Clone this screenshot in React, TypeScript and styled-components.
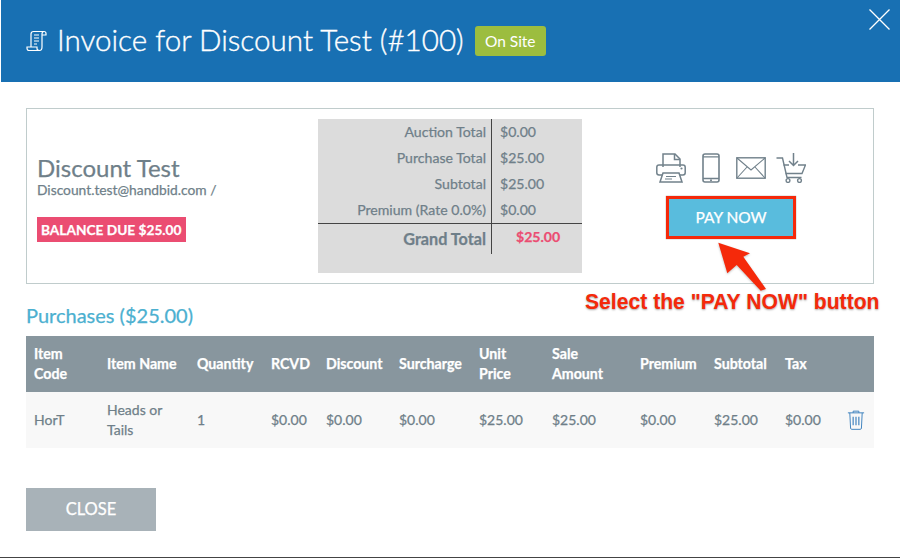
import styled, { createGlobalStyle } from "styled-components";

const GlobalStyle = createGlobalStyle`
  html, body {
    margin: 0;
    padding: 0;
    background: #fff;
    font-family: Lato, "Open Sans", sans-serif;
  }
`;

const Modal = styled.div`
  position: relative;
  width: 900px;
  height: 558px;
  box-sizing: border-box;
  overflow: hidden;
  border-bottom: 1px solid #444;
  background: #fff;
`;

const Header = styled.header`
  position: relative;
  height: 82px;
  margin-left: 1px;
  background: #1870b3;
  display: flex;
  align-items: center;
  padding-left: 25px;
  color: #fff;
`;

const Title = styled.h1`
  margin: 0 11px 2px 9px;
  font-size: 29.6px;
  font-weight: 300;
  line-height: 40px;
  white-space: nowrap;
  -webkit-text-stroke: 0.35px #fff;
`;

const Badge = styled.span`
  display: flex;
  align-items: center;
  justify-content: center;
  width: 71px;
  height: 30px;
  border-radius: 3px;
  background: #9cbd3f;
  font-size: 15.5px;
`;

const CloseX = styled.svg`
  position: absolute;
  top: 9px;
  right: 10px;
`;

const Content = styled.main`
  padding: 26px 26px 0;
  -webkit-text-stroke: 0.25px currentColor;
`;

const Summary = styled.section`
  height: 176px;
  box-sizing: border-box;
  border: 1px solid #c0cccc;
  display: flex;
  padding: 10px 0;
`;

const Buyer = styled.div`
  width: 291px;
  padding: 34px 0 0 10px;
  box-sizing: border-box;
  color: #6f7f89;
`;

const BuyerName = styled.div`
  font-size: 24px;
  line-height: 29px;
`;

const BuyerMail = styled.div`
  font-size: 13.8px;
  line-height: 15px;
`;

const Balance = styled.div`
  display: inline-block;
  margin-top: 20px;
  padding: 0 4px;
  background: #eb4d72;
  color: #fff;
  font-size: 13.7px;
  font-weight: 700;
  line-height: 25px;
`;

const Totals = styled.div`
  width: 264px;
  height: 154px;
  background: #dcdcdc;
  color: #6f7f89;
  font-size: 14.1px;
`;

const TotalRow = styled.div<{ $grand?: boolean }>`
  display: grid;
  grid-template-columns: 174px 90px;
  height: ${(p) => (p.$grand ? "30px" : "26px")};
  line-height: ${(p) => (p.$grand ? "30px" : "26px")};
  border-top: ${(p) => (p.$grand ? "1px solid #444" : "none")};
`;

const TotalLabel = styled.div<{ $grand?: boolean }>`
  text-align: right;
  padding-right: 5px;
  border-right: 1px solid #444;
  font-size: ${(p) => (p.$grand ? "16.2px" : "14.1px")};
  font-weight: ${(p) => (p.$grand ? 700 : 400)};
`;

const TotalValue = styled.div`
  padding-left: 8px;
`;

const GrandValue = styled.div`
  padding-left: 24px;
  color: #eb4d72;
  font-weight: 700;
  line-height: 26px;
`;

const Actions = styled.div`
  flex: 1;
  display: flex;
  flex-direction: column;
  align-items: center;
  padding: 33px 0 0 7px;
`;

const IconRow = styled.div`
  display: flex;
  align-items: center;
  height: 32px;
  color: #71818b;
`;

const IconSlot = styled.span<{ $gap: number }>`
  display: flex;
  margin-right: ${(p) => p.$gap}px;
`;

const PayButton = styled.button`
  margin-top: 13px;
  width: 126px;
  height: 39px;
  padding: 0;
  border: 0;
  background: #59bcdd;
  color: #fff;
  font-family: inherit;
  font-size: 15.5px;
  -webkit-text-stroke: 0.25px #fff;
`;

const SectionTitle = styled.h2`
  margin: 19px 0 9px;
  color: #4cb0d0;
  font-size: 20px;
  font-weight: 400;
  line-height: 24px;
`;

const columns = "73px 90px 74px 55px 73px 80px 73px 88px 74px 71px 62px 1fr";

const HeadRow = styled.div`
  display: grid;
  grid-template-columns: ${columns};
  align-items: center;
  height: 56px;
  padding-left: 8px;
  background: #88969e;
  color: #fff;
  font-size: 14.2px;
  font-weight: 700;
  line-height: 20px;
`;

const BodyRow = styled.div`
  display: grid;
  grid-template-columns: ${columns};
  align-items: center;
  height: 56px;
  padding-left: 8px;
  background: #f8f8f8;
  color: #6f7f89;
  font-size: 14px;
  line-height: 20px;
`;

const CloseButton = styled.button`
  display: block;
  margin-top: 40px;
  width: 130px;
  height: 43px;
  padding: 0 0 1px;
  border: 0;
  background: #a8b2b8;
  color: #fff;
  font-family: inherit;
  font-size: 16.5px;
  -webkit-text-stroke: 0.25px #fff;
`;

const Highlight = styled.div`
  position: absolute;
  left: 666px;
  top: 196px;
  width: 130px;
  height: 43px;
  box-sizing: border-box;
  border: 3px solid #f5290a;
  box-shadow: 0 0 1px rgba(0, 0, 0, 0.5);
`;

const Arrow = styled.svg`
  position: absolute;
  left: 715px;
  top: 238px;
  filter: drop-shadow(0 1px 1px rgba(0, 0, 0, 0.25));
`;

const Callout = styled.div`
  position: absolute;
  left: 585px;
  top: 290px;
  color: #f5290a;
  font-family: "Liberation Sans", Arial, sans-serif;
  font-size: 21.15px;
  font-weight: 700;
  line-height: 24px;
  white-space: nowrap;
  text-shadow: 0 1px 2px rgba(0, 0, 0, 0.35);
`;

const headings = [
  <>Item<br />Code</>,
  "Item Name",
  "Quantity",
  "RCVD",
  "Discount",
  "Surcharge",
  <>Unit<br />Price</>,
  <>Sale<br />Amount</>,
  "Premium",
  "Subtotal",
  "Tax",
];

const cells = [
  "HorT",
  <>Heads or<br />Tails</>,
  "1",
  "$0.00",
  "$0.00",
  "$0.00",
  "$25.00",
  "$25.00",
  "$0.00",
  "$25.00",
  "$0.00",
];

const totals = [
  ["Auction Total", "$0.00"],
  ["Purchase Total", "$25.00"],
  ["Subtotal", "$25.00"],
  ["Premium (Rate 0.0%)", "$0.00"],
];

const ScrollIcon = () => (
  <svg width="22" height="22" viewBox="0 0 22 22" fill="none" stroke="#fff" strokeWidth="1.2">
    <path d="M5 17V4c0-1.500 1-2.500 2.500-2.500H18c-1.200 0-2 1-2 2.500v13c0 2-1 3.500-2.500 3.500H3c-1.300 0-2-1-2-2.200V17h10v1.500c0 1 .8 2 2.500 2" />
    <path d="M18 1.500c1.200 0 2 .8 2 2V5h-4M8 5h5M8 8h5M8 11h5M8 14h3" />
  </svg>
);

const PrinterIcon = () => (
  <svg width="30" height="30" viewBox="0 0 30 30" fill="none" stroke="currentColor" strokeWidth="1.500">
    <path d="M7 14V1h12l5 5v8" />
    <path d="M18.500 1v5.500H24" />
    <path d="M6 22H3c-1.200 0-2.200-1-2.200-2.200v-5.600C.8 13 1.800 12 3 12h24c1.200 0 2.200 1 2.200 2.200v5.600c0 1.200-1 2.200-2.200 2.200h-3" />
    <path d="M7 20h16l3 9H4z" />
    <path d="M10 23.500h10M9 26h7" strokeWidth="1.100" />
    <circle cx="25.500" cy="15.500" r="1.100" fill="currentColor" stroke="none" />
  </svg>
);

const PhoneIcon = () => (
  <svg width="18" height="30" viewBox="0 0 18 30" fill="none" stroke="currentColor" strokeWidth="1.600">
    <rect x="1" y="1" width="16" height="28" rx="2" />
    <path d="M1 3.800h16M1 25.500h16" strokeWidth="1.300" />
    <circle cx="9" cy="27.300" r="1" fill="currentColor" stroke="none" />
  </svg>
);

const MailIcon = () => (
  <svg width="30" height="22" viewBox="0 0 30 22" fill="none" stroke="currentColor" strokeWidth="1.400">
    <rect x=".8" y=".8" width="28.400" height="20.400" />
    <path d="M1 1l14 12L29 1M1 21l10.500-11.500M29 21L18.500 9.500" strokeWidth="1.100" />
  </svg>
);

const CartIcon = () => (
  <svg width="30" height="30" viewBox="0 0 30 30" fill="none" stroke="currentColor" strokeWidth="1.400">
    <path d="M.5 5h6l4.500 19.500h14.500" />
    <path d="M7.500 12H13M22 12h7.500L26 20.500H9.500" />
    <path d="M17.500 0v12M13 8l4.500 4.500L22 8" strokeWidth="1.500" />
    <circle cx="12" cy="27.500" r="1.900" />
    <circle cx="23.500" cy="27.500" r="1.900" />
  </svg>
);

const TrashIcon = () => (
  <svg width="18" height="20" viewBox="0 0 18 21" fill="none" stroke="#3a7fbd" strokeWidth="1">
    <path d="M.5 3h17M6 3V1.200h6V3M2.500 3l.8 16c0 .8.500 1.300 1.200 1.300h9c.7 0 1.200-.5 1.200-1.300l.8-16" />
    <path d="M6 7v9M9 7v9M12 7v9" strokeWidth="1.200" />
  </svg>
);

const App = () => {
  return (
    <Modal>
      <GlobalStyle />
      <Header>
        <ScrollIcon />
        <Title>Invoice for Discount Test (#100)</Title>
        <Badge>On Site</Badge>
        <CloseX width="21" height="21" viewBox="0 0 21 21" stroke="#fff" strokeWidth="1.300">
          <path d="M.5.500l20 20M20.500.500l-20 20" />
        </CloseX>
      </Header>
      <Content>
        <Summary>
          <Buyer>
            <BuyerName>Discount Test</BuyerName>
            <BuyerMail>Discount.test@handbid.com /</BuyerMail>
            <Balance>BALANCE DUE $25.00</Balance>
          </Buyer>
          <Totals>
            {totals.map(([label, value]) => (
              <TotalRow key={label}>
                <TotalLabel>{label}</TotalLabel>
                <TotalValue>{value}</TotalValue>
              </TotalRow>
            ))}
            <TotalRow $grand>
              <TotalLabel $grand>Grand Total</TotalLabel>
              <GrandValue>$25.00</GrandValue>
            </TotalRow>
          </Totals>
          <Actions>
            <IconRow>
              <IconSlot $gap={16}><PrinterIcon /></IconSlot>
              <IconSlot $gap={16}><PhoneIcon /></IconSlot>
              <IconSlot $gap={10}><MailIcon /></IconSlot>
              <IconSlot $gap={0}><CartIcon /></IconSlot>
            </IconRow>
            <PayButton>PAY NOW</PayButton>
          </Actions>
        </Summary>
        <SectionTitle>Purchases ($25.00)</SectionTitle>
        <HeadRow>
          {headings.map((h, i) => (
            <div key={i}>{h}</div>
          ))}
        </HeadRow>
        <BodyRow>
          {cells.map((c, i) => (
            <div key={i}>{c}</div>
          ))}
          <TrashIcon />
        </BodyRow>
        <CloseButton>CLOSE</CloseButton>
      </Content>
      <Highlight />
      <Arrow width="56" height="56" viewBox="0 0 56 56">
        <path d="M3.300 4.700L35 15.300l-6.700 3.400L51 51l-5.300 1.700L21.700 27l-9.400 8.300z" fill="#f5290a" />
      </Arrow>
      <Callout>Select the "PAY NOW" button</Callout>
    </Modal>
  );
};

export default App;
